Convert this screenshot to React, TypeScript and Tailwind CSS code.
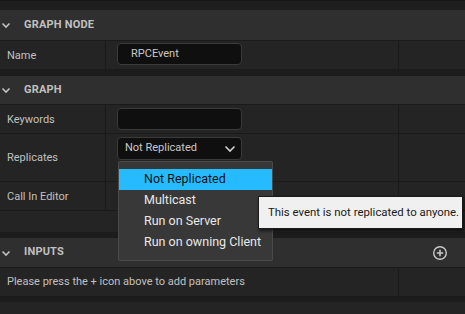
const font = "font-['Roboto','Liberation_Sans',sans-serif]";

function Chevron() {
  return (
    <svg width="10" height="10" viewBox="0 0 10 10" className="shrink-0">
      <path d="M1.5 3.5 L5 7 L8.5 3.5" fill="none" stroke="#c0c0c0" strokeWidth="1.6" />
    </svg>
  );
}

function PlusCircle() {
  return (
    <svg width="16" height="16" viewBox="0 0 16 16">
      <circle cx="8" cy="8" r="6.3" fill="none" stroke="#c8c8c8" strokeWidth="1.4" />
      <path d="M8 4.8 V11.2 M4.8 8 H11.2" stroke="#c8c8c8" strokeWidth="1.6" />
    </svg>
  );
}

function Header({ title, h, plus }: { title: string; h: string; plus?: boolean }) {
  return (
    <div className={`flex items-center bg-[#2f2f2f] border-b border-[#1a1a1a] ${h}`}>
      <div className="pl-[1px] w-[24px]">
        <Chevron />
      </div>
      <span className="text-[11px] font-bold text-[#c0c0c0] tracking-[0.2px]">{title}</span>
      {plus && (
        <div className="ml-auto mr-[17px] flex items-center">
          <PlusCircle />
        </div>
      )}
    </div>
  );
}

function Row({ label, h, children }: { label: string; h: string; children?: React.ReactNode }) {
  return (
    <div className={`flex bg-[#242424] border-b border-[#1a1a1a] ${h}`}>
      <div className="w-[106px] flex items-center pl-[7px] pt-[2px] text-[11px] text-[#c0c0c0] border-r border-[#1a1a1a]">
        {label}
      </div>
      <div className="w-[293px] relative pl-[11px] border-r border-[#1a1a1a]">{children}</div>
      <div className="flex-1" />
    </div>
  );
}

export default function App() {
  return (
    <div className={`${font} w-[465px] h-[314px] bg-[#1c1c1c] overflow-hidden relative`}>
      <div className="h-[10px] bg-[#1e1e1e] border-t border-[#161616]" />
      <Header title="GRAPH NODE" h="h-[31px]" />
      <Row label="Name" h="h-[29px]">
        <div className="mt-[2px] w-[125px] h-[22px] rounded-[4px] bg-[#0f0f0f] border border-[#3a3a3a] flex items-center pl-[13px] text-[11px] text-[#c8c8c8]">
          RPCEvent
        </div>
      </Row>
      <div className="h-[6px] bg-[#1c1c1c]" />
      <Header title="GRAPH" h="h-[29px]" />
      <Row label="Keywords" h="h-[29px]">
        <div className="mt-[3px] w-[125px] h-[22px] rounded-[4px] bg-[#0f0f0f] border border-[#3a3a3a]" />
      </Row>
      <Row label="Replicates" h="h-[48px]">
        <div className="mt-[3px] w-[125px] h-[23px] rounded-[4px] bg-[#0f0f0f] border border-[#3a3a3a] flex items-center pl-[7px] pr-[5px] text-[11px] text-[#c8c8c8]">
          <span className="flex-1">Not Replicated</span>
          <svg width="12" height="10" viewBox="0 0 12 10">
            <path d="M1.5 2.5 L6 7 L10.5 2.5" fill="none" stroke="#d0d0d0" strokeWidth="1.6" />
          </svg>
        </div>
      </Row>
      <Row label="Call In Editor" h="h-[29px]" />
      <div className="h-[21px] bg-[#242424]" />
      <div className="h-[6px] bg-[#1c1c1c]" />
      <Header title="INPUTS" h="h-[30px]" plus />
      <div className="flex h-[29px] bg-[#242424] border-b border-[#1a1a1a]">
        <div className="w-[399px] flex items-center pl-[7px] text-[11px] text-[#c0c0c0] border-r border-[#1a1a1a]">
          Please press the + icon above to add parameters
        </div>
        <div className="flex-1" />
      </div>
      <div className="h-[5px] bg-[#1c1c1c]" />
      <div className="h-[20px] bg-[#242424]" />

      <div className="absolute left-[118px] top-[161px] w-[155px] h-[100px] bg-[#383838] border border-[#4a4a4a] rounded-[2px] pt-[7px] text-[12.5px] text-[#e8e8e8]">
        <div className="h-[21px] flex items-center pl-[25px] bg-[#26bbff] text-[#101010]">Not Replicated</div>
        <div className="h-[21px] flex items-center pl-[25px]">Multicast</div>
        <div className="h-[21px] flex items-center pl-[25px]">Run on Server</div>
        <div className="h-[21px] flex items-center pl-[25px]">Run on owning Client</div>
      </div>

      <div className="absolute left-[258px] top-[196px] w-[205px] h-[33px] bg-[#f0f0f0] border border-[#1a1a1a] shadow-[1px_2px_3px_rgba(0,0,0,0.6)] flex items-center pl-[9px] text-[11.4px] text-[#1a1a1a]">
        This event is not replicated to anyone.
      </div>
    </div>
  );
}
